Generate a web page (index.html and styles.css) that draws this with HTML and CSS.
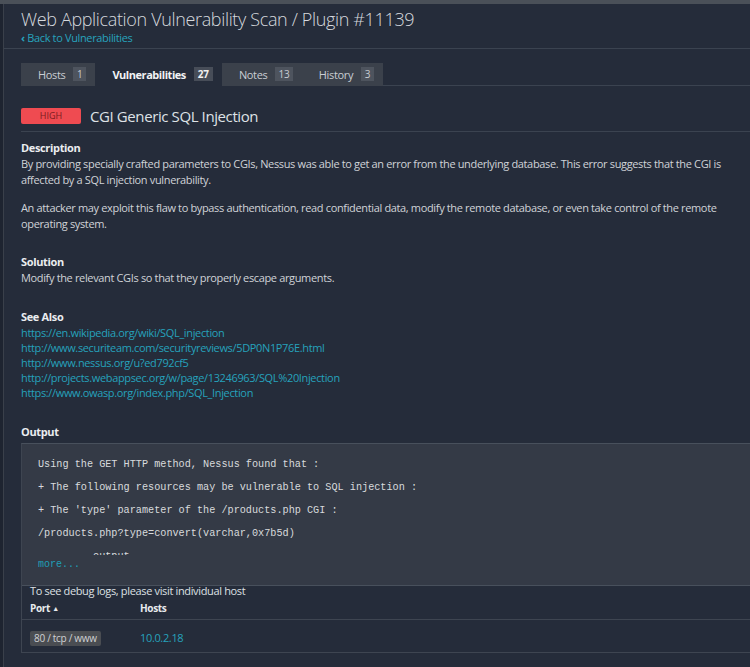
FILE: index.html
```html
<!DOCTYPE html>
<html>
<head>
<meta charset="utf-8">
<link rel="stylesheet" href="styles.css">
</head>
<body>
<div class="topbar"></div>
<div class="layout">
  <div class="sidebar"></div>
  <main class="main">
    <header class="header">
      <h1 class="title">Web Application Vulnerability Scan / Plugin #11139</h1>
      <a class="back"><span class="chev">‹</span> Back to Vulnerabilities</a>
    </header>
    <div class="content">
      <nav class="tabs">
        <div class="tab">Hosts <span class="count">1</span></div>
        <div class="tab active">Vulnerabilities <span class="count">27</span></div>
        <div class="tab">Notes <span class="count">13</span></div>
        <div class="tab">History <span class="count">3</span></div>
        <div class="tabfill"></div>
      </nav>
      <div class="vulnhead">
        <span class="sev">HIGH</span>
        <span class="vname">CGI Generic SQL Injection</span>
      </div>
      <section class="sec">
        <h2 class="sh">Description</h2>
        <p class="txt">By providing specially crafted parameters to CGIs, Nessus was able to get an error from the underlying database. This error suggests that the CGI is affected by a SQL injection vulnerability.</p>
        <p class="txt p2">An attacker may exploit this flaw to bypass authentication, read confidential data, modify the remote database, or even take control of the remote operating system.</p>
      </section>
      <section class="sec sol">
        <h2 class="sh">Solution</h2>
        <p class="txt">Modify the relevant CGIs so that they properly escape arguments.</p>
      </section>
      <section class="sec see">
        <h2 class="sh">See Also</h2>
        <ul class="links">
          <li><a>https://en.wikipedia.org/wiki/SQL_injection</a></li>
          <li><a>http://www.securiteam.com/securityreviews/5DP0N1P76E.html</a></li>
          <li><a>http://www.nessus.org/u?ed792cf5</a></li>
          <li><a>http://projects.webappsec.org/w/page/13246963/SQL%20Injection</a></li>
          <li><a>https://www.owasp.org/index.php/SQL_Injection</a></li>
        </ul>
      </section>
      <section class="sec out">
        <h2 class="sh">Output</h2>
        <div class="outbox">
          <div class="pre">Using the GET HTTP method, Nessus found that :
+ The following resources may be vulnerable to SQL injection :
+ The 'type' parameter of the /products.php CGI :
/products.php?type=convert(varchar,0x7b5d)
-------- output --------</div>
          <div class="more">more...</div>
        </div>
        <div class="hosttable">
          <p class="debug">To see debug logs, please visit individual host</p>
          <div class="thead">
            <div class="c1">Port <span class="arrow">▲</span></div>
            <div class="c2">Hosts</div>
          </div>
          <div class="trow">
            <div class="c1"><span class="port">80 / tcp / www</span></div>
            <div class="c2"><a class="ip">10.0.2.18</a></div>
          </div>
        </div>
      </section>
    </div>
  </main>
</div>
</body>
</html>
```

FILE: styles.css
```css
html, body {
  margin: 0;
  padding: 0;
  background: #252c3a;
  overflow: hidden;
  font-family: "Open Sans", "Noto Sans", sans-serif;
  color: #d4d7dc;
  letter-spacing: -0.35px;
}
.topbar {
  height: 4px;
  background: #4a5058;
}
.layout {
  display: flex;
  min-height: 663px;
}
.sidebar {
  width: 3px;
  background: #1e2430;
  border-right: 1px solid #3a404a;
  flex: none;
}
.main {
  flex: 1;
  min-width: 0;
}
.header {
  padding: 4px 0 3px 17px;
  border-bottom: 1px solid #3b4350;
}
.title {
  margin: 0;
  font-size: 18px;
  line-height: 22px;
  font-weight: 300;
  color: #d6d9de;
  letter-spacing: -0.35px;
}
.back {
  display: block;
  font-size: 11px;
  line-height: 15px;
  color: #27a3bd;
}
.chev {
  font-weight: 700;
}
.content {
  padding-left: 17px;
  width: 750px;
}
.tabs {
  display: flex;
  margin-top: 14px;
  height: 23px;
}
.tab {
  display: flex;
  align-items: center;
  gap: 8px;
  padding: 0 9px 0 17px;
  background: #3b414b;
  font-size: 11px;
  color: #c9cdd3;
  border-bottom: 1px solid #3b414b;
}
.tab.active {
  background: #252c3a;
  border-bottom-color: #252c3a;
  color: #f2f3f5;
  font-weight: 700;
  letter-spacing: -0.45px;
}
.count {
  display: inline-block;
  min-width: 13px;
  height: 14px;
  line-height: 14px;
  padding: 0 3px;
  box-sizing: border-box;
  text-align: center;
  background: #4e545e;
  font-size: 10px;
  color: #c8ccd2;
  font-weight: 400;
  letter-spacing: 0;
}
.tab.active .count {
  background: #474d58;
  color: #f0f0f0;
  font-weight: 700;
  min-width: 19px;
}
.tabfill {
  flex: 1;
  border-bottom: 1px solid #3b4350;
}
.vulnhead {
  display: flex;
  align-items: center;
  gap: 9px;
  margin-top: 22px;
  padding-bottom: 7px;
  border-bottom: 1px solid #3b4350;
}
.sev {
  width: 60px;
  height: 16px;
  line-height: 16px;
  text-align: center;
  background: #ef4b51;
  border-radius: 2px;
  font-size: 9px;
  color: #7a1b1f;
  letter-spacing: 0;
}
.vname {
  font-size: 15px;
  line-height: 16px;
  color: #dfe2e6;
  letter-spacing: -0.4px;
}
.sec {
  margin-top: 8px;
}
.sh {
  margin: 0;
  font-size: 11px;
  line-height: 16px;
  font-weight: 700;
  color: #ebedf0;
}
.txt {
  margin: 0;
  font-size: 11px;
  line-height: 16px;
  color: #d0d3d8;
  padding-right: 20px;
}
.p2 {
  margin-top: 12px;
}
.sol {
  margin-top: 22px;
}
.see {
  margin-top: 23px;
}
.links {
  list-style: none;
  margin: 0;
  padding: 0;
  font-size: 11px;
  line-height: 15px;
}
.links a, .ip {
  color: #26a2bc;
}
.out {
  margin-top: 24px;
}
.outbox {
  margin-top: 3px;
  background: #343a46;
  border-top: 1px solid #48505c;
  border-left: 1px solid #3e4551;
  border-bottom: 1px solid #48505c;
  padding: 9px 0 13px 16px;
  letter-spacing: 0;
}
.pre {
  white-space: pre;
  font-family: "Liberation Mono", monospace;
  font-size: 10.2px;
  line-height: 23px;
  color: #d8dadd;
  height: 102px;
  overflow: hidden;
}
.more {
  font-family: "Liberation Mono", monospace;
  font-size: 10px;
  line-height: 14px;
  color: #1f9fb6;
  margin-top: 3px;
}
.hosttable {
  border-left: 1px solid #3e4551;
  border-bottom: 1px solid #3e4551;
  padding-left: 8px;
}
.debug {
  margin: -2px 0 0;
  font-size: 11px;
  line-height: 13px;
  color: #dde0e4;
}
.thead, .trow {
  display: flex;
  align-items: center;
}
.thead {
  height: 22px;
  margin-left: -8px;
  padding-left: 8px;
  border-bottom: 1px solid #3e4551;
  font-size: 10px;
  font-weight: 700;
  color: #e8eaed;
}
.trow {
  height: 32px;
}
.c1 {
  width: 110px;
}
.arrow {
  font-size: 7px;
  vertical-align: 1px;
}
.port {
  display: inline-block;
  height: 15px;
  line-height: 15px;
  padding: 0 4px;
  background: #4a4d52;
  border-radius: 2px;
  font-size: 10px;
  color: #cfd1d4;
  letter-spacing: -0.3px;
}
.ip {
  font-size: 11px;
}
```
